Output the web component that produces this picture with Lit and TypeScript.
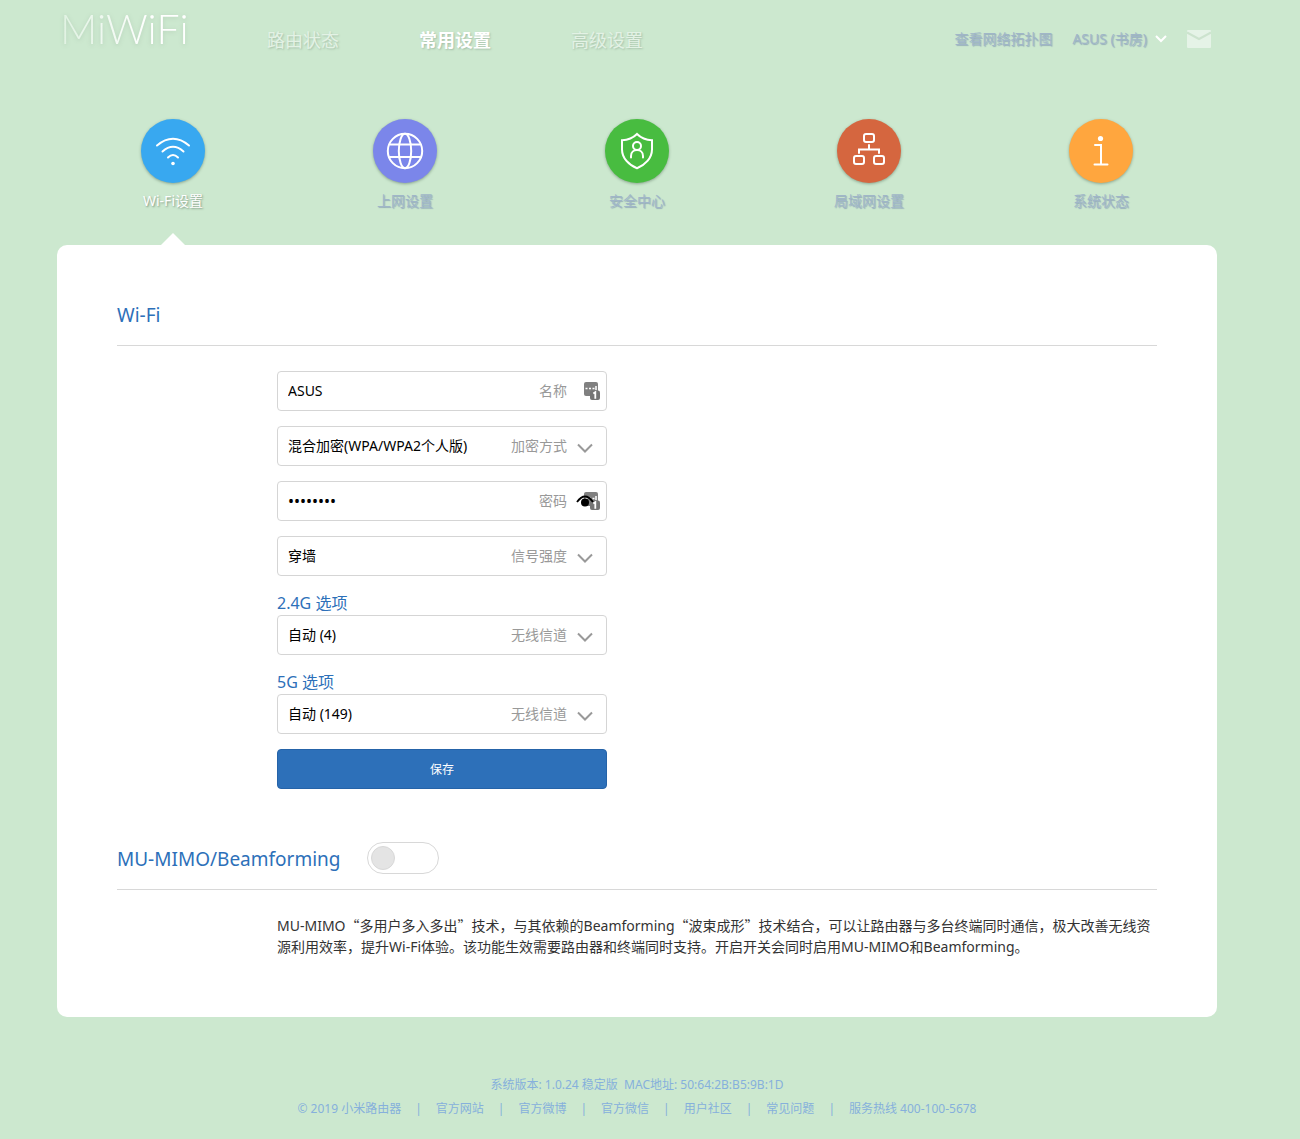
import { LitElement, html, svg, css, nothing } from "lit";
import { customElement, state } from "lit/decorators.js";
import { classMap } from "lit/directives/class-map.js";

const tabs = [
  {
    name: "Wi-Fi设置",
    tone: "blue",
    icon: svg`<path d="M16 26.500q16-13.500 32 0M21.500 32.500q10.500-9.500 21 0M27 38.500q5-5 10 0" stroke-width="2"/><circle cx="32" cy="44.500" r="1.800" fill="#fff" stroke="none"/>`,
  },
  {
    name: "上网设置",
    tone: "violet",
    icon: svg`<circle cx="32" cy="32" r="17.200"/><ellipse cx="32" cy="32" rx="6.200" ry="17.200"/><path d="M17 25.500h30M17 38h30"/>`,
  },
  {
    name: "安全中心",
    tone: "green",
    icon: svg`<path d="M32 15c-4 4-9 6-15 6.200v9c0 9 7 16 15 19 8-3 15-10 15-19v-9c-6-.2-11-2.200-15-6.200z"/><circle cx="32" cy="27" r="4"/><path d="M26 38.500v-1.500c0-8 12-8 12 0v1.500"/>`,
  },
  {
    name: "局域网设置",
    tone: "red",
    icon: svg`<rect x="27" y="15" width="10" height="8" rx="2"/><rect x="17" y="37" width="10" height="8" rx="2"/><rect x="37" y="37" width="10" height="8" rx="2"/><path d="M32 26v4M22 34v-3.500h20V34"/>`,
  },
  {
    name: "系统状态",
    tone: "orange",
    icon: svg`<circle cx="31.500" cy="19.500" r="2.600" fill="#fff" stroke="none"/><path d="M26 26h6v19M25.500 45.500h13"/>`,
  },
];

const footerLinks = ["官方网站", "官方微博", "官方微信", "用户社区", "常见问题"];

const chevron = html`<svg class="chevron" viewBox="0 0 16 10" aria-hidden="true">
  <path d="M1 1.500l7 7 7-7" />
</svg>`;

const badge = html`<svg class="badge" viewBox="0 0 17 19" aria-hidden="true">
  <rect x="1" y="0" width="14" height="14" rx="2" fill="#808080" />
  <path d="M2.500 6.500h2M6 6.500h2M9.500 6.500h2M13 4v4" stroke="#fff" stroke-width="1.500" />
  <rect x="7" y="8.500" width="10" height="9.500" rx="2" fill="#757575" />
  <path d="M10.300 11.500l2-1.300v6.500" stroke="#fff" stroke-width="1.800" fill="none" />
</svg>`;

@customElement("app-root")
export class AppRoot extends LitElement {
  @state() private active = 0;
  @state() private revealed = false;

  static styles = css`
    :host {
      display: block;
      min-height: 100vh;
      box-sizing: border-box;
      padding: 0 26px 18px 0;
      background: #cce8cf;
      color: #333;
      font: 14px/21px "Noto Sans", "Noto Sans CJK SC", sans-serif;
    }
    * { box-sizing: border-box; }
    a { color: inherit; text-decoration: none; }
    h2, h3, p { margin: 0; font-weight: 400; }
    button, input, select { font: inherit; }
    .page { max-width: 1160px; margin: 0 auto; }

    .top { display: flex; align-items: center; height: 80px; padding: 0 6px 0 3px; }
    .logo {
      width: 127px;
      margin-right: 80px;
      padding-bottom: 22px;
      font: 300 41px/52px Lato, sans-serif;
      color: #fff;
    }
    .logo span {
      background: linear-gradient(90deg, #e0f2e2, #fff 70%);
      background-clip: text;
      -webkit-background-clip: text;
      color: transparent;
      filter: drop-shadow(0 1px 2px #b4cfb7);
    }
    .main-nav { display: flex; gap: 80px; font-size: 18px; line-height: 24px; color: #e3f2e5; text-shadow: 1px 1px 2px #a4bfa8; }
    .main-nav .on { color: #fff; font-weight: 700; }
    .tools { display: flex; align-items: center; gap: 20px; margin-left: auto; padding-bottom: 3px; color: #a0b6c8; text-shadow: 1px 1px 1px #94adb8; }
    .router { display: flex; align-items: center; gap: 8px; padding: 0; border: 0; background: none; color: inherit; text-shadow: inherit; }
    .router svg { width: 12px; height: 8px; fill: none; stroke: #fff; stroke-width: 2; }
    .mail { display: flex; }
    .mail svg { width: 24px; height: 18px; }

    .tabs { display: grid; grid-template-columns: repeat(5, 1fr); height: 165px; padding-top: 39px; }
    .tab {
      display: flex;
      flex-direction: column;
      align-items: center;
      gap: 7px;
      padding: 0;
      border: 0;
      background: none;
      color: #a0b6c8;
      text-shadow: 1px 1px 1px #94adb8;
      cursor: pointer;
    }
    .tab.on { color: #fff; text-shadow: 1px 1px 2px #7f9883; }
    .tab.on::after { content: ""; margin-top: auto; border: 12px solid transparent; border-top: 0; border-bottom-color: #fff; }
    .disc { width: 64px; height: 64px; border-radius: 50%; box-shadow: 0 1px 3px #8aa58e; fill: none; stroke: #fff; stroke-width: 2; stroke-linecap: round; }
    .blue { background: #38a8f0; }
    .violet { background: #7b86ea; }
    .green { background: #48bc40; }
    .red { background: #d5663f; }
    .orange { background: #ffa63e; }

    .card { padding: 40px 60px 60px; border-radius: 10px; background: #fff; }
    .head { display: flex; align-items: center; gap: 26px; border-bottom: 1px solid #d8d8d8; color: #2d70b9; }
    .head h2 { font-size: 19px; line-height: 60px; }
    .form { display: flex; flex-direction: column; gap: 15px; width: 330px; margin: 25px 0 40px 160px; }
    .group h3 { color: #2d70b9; font-size: 16px; line-height: 24px; }
    .field { display: grid; grid-template-columns: 1fr auto 24px; column-gap: 9px; align-items: center; height: 40px; border: 1px solid #d5d5d5; border-radius: 4px; padding-right: 6px; background: #fff; }
    .field:focus-within { border-color: #2d70b9; }
    .field input, .field select {
      grid-area: 1 / 1 / 2 / -1;
      width: 100%;
      height: 38px;
      margin: 0;
      padding: 0 90px 2px 10px;
      border: 0;
      outline: 0;
      background: transparent;
      color: #000;
      appearance: none;
    }
    .field input[type="password"] { padding-bottom: 0; font-size: 16px; }
    .field label { grid-area: 1 / 2; padding-bottom: 2px; color: #999; pointer-events: none; }
    .field > svg, .extras { grid-area: 1 / 3; pointer-events: none; }
    .chevron { width: 16px; height: 10px; margin-top: 3px; margin-left: 1px; fill: none; stroke: #999; stroke-width: 2; }
    .extras { display: grid; align-items: center; }
    .badge { grid-area: 1 / 1; justify-self: end; width: 17px; height: 19px; }
    .eye { grid-area: 1 / 1; display: flex; justify-self: start; padding: 0; border: 0; background: none; pointer-events: auto; }
    .eye svg { width: 18px; height: 14px; }
    .save { height: 40px; border: 1px solid #2563a8; border-radius: 4px; background: #2d70b9; color: #fff; font-size: 12px; cursor: pointer; }

    .switch { display: flex; align-items: center; width: 72px; height: 32px; margin: 0 0 2px; padding: 3px; border: 1px solid #d8d8d8; border-radius: 16px; background: #fff; appearance: none; cursor: pointer; }
    .switch::before { content: ""; box-sizing: border-box; width: 24px; height: 24px; border: 1px solid #d8d8d8; border-radius: 50%; background: #e4e4e4; }
    .switch:checked { justify-content: flex-end; background: #2d70b9; }
    .note { margin: 25px 0 0 160px; }
    .wide { font-family: "Noto Sans CJK SC", sans-serif; }

    .foot { margin-top: 56px; color: #86b0dc; font-size: 12px; line-height: 24px; text-align: center; }
    .foot ul { display: flex; flex-wrap: wrap; justify-content: center; margin: 0; padding: 0; list-style: none; }
    .foot li + li::before { content: "|"; margin: 0 14px; }
  `;

  private select(id: string, value: string, label: string) {
    return html`<div class="field">
      <select id=${id}><option>${value}</option></select>
      <label for=${id}>${label}</label>
      ${chevron}
    </div>`;
  }

  render() {
    return html`
      <div class="page">
        <header class="top">
          <a class="logo" href="#"><span>MiWiFi</span></a>
          <nav class="main-nav">
            <a href="#status">路由状态</a>
            <a class="on" href="#common" aria-current="page">常用设置</a>
            <a href="#advanced">高级设置</a>
          </nav>
          <div class="tools">
            <a href="#topology">查看网络拓扑图</a>
            <button class="router">
              ASUS (书房)
              <svg viewBox="0 0 12 8" aria-hidden="true"><path d="M1 1l5 5 5-5" /></svg>
            </button>
            <a class="mail" href="#messages" aria-label="消息">
              <svg viewBox="0 0 24 18"><rect width="24" height="18" rx="1" fill="#e5f3e7" /><path d="M0 2.500l12 6.500 12-6.500" fill="none" stroke="#cce3ce" stroke-width="2" /></svg>
            </a>
          </div>
        </header>

        <nav class="tabs">
          ${tabs.map(
            (tab, i) => html`<button
              class=${classMap({ tab: true, on: i === this.active })}
              aria-current=${i === this.active ? "page" : nothing}
              @click=${() => (this.active = i)}
            >
              <svg class="disc ${tab.tone}" viewBox="0 0 64 64" aria-hidden="true">${tab.icon}</svg>
              <span>${tab.name}</span>
            </button>`,
          )}
        </nav>

        <main class="card">
          <section>
            <div class="head"><h2>Wi-Fi</h2></div>
            <form class="form" @submit=${(e: Event) => e.preventDefault()}>
              <div class="field">
                <input id="ssid" type="text" value="ASUS" />
                <label for="ssid">名称</label>
                <div class="extras">${badge}</div>
              </div>
              ${this.select("encryption", "混合加密(WPA/WPA2个人版)", "加密方式")}
              <div class="field">
                <input id="password" type=${this.revealed ? "text" : "password"} value="12345678" />
                <label for="password">密码</label>
                <div class="extras">
                  ${badge}
                  <button class="eye" type="button" aria-label="显示密码" @click=${() => (this.revealed = !this.revealed)}>
                    <svg viewBox="0 0 18 14"><path d="M1 8q8-11 16 0" fill="none" stroke="#000" stroke-width="1.800" /><circle cx="9" cy="8.500" r="4" /></svg>
                  </button>
                </div>
              </div>
              ${this.select("power", "穿墙", "信号强度")}
              <div class="group">
                <h3>2.4G 选项</h3>
                ${this.select("channel24", "自动 (4)", "无线信道")}
              </div>
              <div class="group">
                <h3>5G 选项</h3>
                ${this.select("channel5", "自动 (149)", "无线信道")}
              </div>
              <button class="save" type="submit">保存</button>
            </form>
          </section>
          <section>
            <div class="head">
              <h2><label for="mimo">MU-MIMO/Beamforming</label></h2>
              <input class="switch" id="mimo" type="checkbox" role="switch" />
            </div>
            <p class="note">MU-MIMO<span class="wide">“</span>多用户多入多出<span class="wide">”</span>技术，与其依赖的Beamforming<span class="wide">“</span>波束成形<span class="wide">”</span>技术结合，可以让路由器与多台终端同时通信，极大改善无线资源利用效率，提升Wi-Fi体验。该功能生效需要路由器和终端同时支持。开启开关会同时启用MU-MIMO和Beamforming。</p>
          </section>
        </main>

        <footer class="foot">
          <div>系统版本: 1.0.24 稳定版&nbsp; MAC地址: 50:64:2B:B5:9B:1D</div>
          <ul>
            <li>© 2019 小米路由器</li>
            ${footerLinks.map((name) => html`<li><a href="#">${name}</a></li>`)}
            <li>服务热线 400-100-5678</li>
          </ul>
        </footer>
      </div>
    `;
  }
}
